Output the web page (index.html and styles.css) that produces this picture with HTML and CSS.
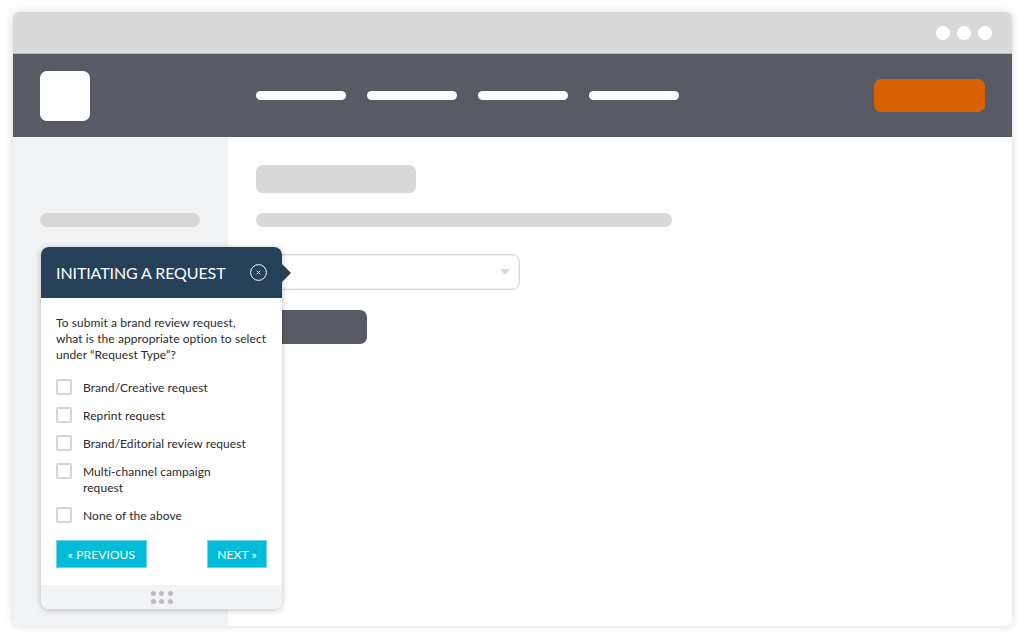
FILE: index.html
```html
<!DOCTYPE html>
<html lang="en">
<head>
    <meta charset="UTF-8">
    <meta name="viewport" content="width=device-width, initial-scale=1.0">
    <title>Initiating a Request</title>
    <link rel="stylesheet" href="styles.css">
</head>
<body>
    <div class="window">
        <div class="title-bar">
            <span class="dot"></span>
            <span class="dot"></span>
            <span class="dot"></span>
        </div>
        <header class="nav-header">
            <div class="logo"></div>
            <nav class="nav-links">
                <span class="nav-bar"></span>
                <span class="nav-bar"></span>
                <span class="nav-bar"></span>
                <span class="nav-bar"></span>
            </nav>
            <div class="nav-cta"></div>
        </header>
        <div class="page">
            <aside class="sidebar">
                <div class="skeleton-line"></div>
            </aside>
            <main class="main-content">
                <div class="skeleton-title"></div>
                <div class="skeleton-line wide"></div>
                <div class="fake-select"><span class="caret"></span></div>
                <div class="fake-button"></div>
            </main>
        </div>

        <section class="popover">
            <div class="popover-head">
                <h1>INITIATING A REQUEST</h1>
                <svg class="close-icon" width="17" height="17" viewBox="0 0 17 17">
                    <circle cx="8.5" cy="8.5" r="7.9" fill="none" stroke="#fff" stroke-width="1"/>
                    <path d="M6.7 6.7l3.6 3.6M10.3 6.7l-3.6 3.6" fill="none" stroke="#fff" stroke-width="1"/>
                </svg>
            </div>
            <div class="popover-body">
                <p class="question">To submit a brand review request,<br>what is the appropriate option to select<br>under “Request Type”?</p>
                <ul class="options">
                    <li><span class="checkbox"></span><span class="option-text">Brand/Creative request</span></li>
                    <li><span class="checkbox"></span><span class="option-text">Reprint request</span></li>
                    <li><span class="checkbox"></span><span class="option-text">Brand/Editorial review request</span></li>
                    <li><span class="checkbox"></span><span class="option-text">Multi-channel campaign<br>request</span></li>
                    <li><span class="checkbox"></span><span class="option-text">None of the above</span></li>
                </ul>
                <div class="popover-actions">
                    <button type="button" class="prev">« PREVIOUS</button>
                    <button type="button" class="next">NEXT »</button>
                </div>
            </div>
            <div class="popover-foot">
                <div class="grip">
                    <span></span><span></span><span></span>
                    <span></span><span></span><span></span>
                </div>
            </div>
        </section>
    </div>
</body>
</html>
```

FILE: styles.css
```css
html, body { margin: 0; height: 100%; overflow: hidden; }
body { background-color: #fff; font-family: "Lato", "Open Sans", sans-serif; }

.window { position: relative; width: 999px; height: 614px; margin: 12px 13px 0; display: flex; flex-direction: column; background-color: #fff; border-radius: 6px; box-shadow: 0 0 8px rgba(0,0,0,0.16); }

.title-bar { height: 41px; flex: none; display: flex; align-items: center; justify-content: flex-end; gap: 7px; padding: 0 20px 0 0; background-color: #d9d9d9; border-radius: 6px 6px 0 0; border-bottom: 1px solid #b9b9bb; }
.dot { width: 14px; height: 14px; border-radius: 50%; background-color: #fff; }

.nav-header { height: 83px; flex: none; display: flex; align-items: center; padding: 0 27px; background-color: #585b63; }
.logo { width: 50px; height: 50px; border-radius: 7px; background-color: #fff; }
.nav-links { display: flex; gap: 21px; margin-left: 166px; }
.nav-bar { width: 90px; height: 9px; border-radius: 5px; background-color: #fff; }
.nav-cta { width: 111px; height: 33px; margin-left: auto; border-radius: 7px; background-color: #d86000; }

.page { flex: 1; display: flex; min-height: 0; }
.sidebar { width: 215px; flex: none; box-sizing: border-box; padding: 76px 27px 0; background-color: #f2f3f5; border-radius: 0 0 0 6px; }
.main-content { flex: 1; padding: 28px 0 0 28px; }

.skeleton-line { width: 160px; height: 14px; border-radius: 7px; background-color: #d9d9d9; }
.skeleton-line.wide { width: 416px; margin-top: 20px; }
.skeleton-title { width: 160px; height: 28px; border-radius: 7px; background-color: #d9d9d9; }

.fake-select { box-sizing: border-box; position: relative; width: 264px; height: 36px; margin-top: 27px; background-color: #fff; border: 1px solid #dadada; border-radius: 8px; box-shadow: inset 0 0 0 1px #f2f2f2; }
.caret { position: absolute; right: 9px; top: 14px; width: 0; height: 0; border-left: 5px solid transparent; border-right: 5px solid transparent; border-top: 6px solid #d9d9d9; }
.fake-button { width: 111px; height: 34px; margin-top: 20px; border-radius: 7px; background-color: #585b63; }

.popover { position: absolute; left: 28px; top: 235px; width: 241px; height: 362px; display: flex; flex-direction: column; background-color: #fff; border-radius: 8px; box-shadow: 0 1px 6px rgba(0,0,0,0.25); color: #2b2b2b; }
.popover-head { position: relative; height: 51px; flex: none; box-sizing: border-box; display: flex; align-items: center; justify-content: space-between; padding: 0 15px; background-color: #254159; border-radius: 8px 8px 0 0; color: #fff; }
.popover-head::after { content: ""; position: absolute; left: 100%; top: 17px; border-left: 9px solid #254159; border-top: 9px solid transparent; border-bottom: 9px solid transparent; }
.popover-head h1 { margin: 0; font-size: 16px; font-weight: 400; letter-spacing: -0.1px; }
.close-icon { flex: none; }

.popover-body { flex: 1; padding: 17px 15px 0; }
.question { margin: 0; font-size: 12px; line-height: 16px; letter-spacing: 0.08px; white-space: nowrap; }
.options { list-style: none; margin: 16px 0 0; padding: 0; }
.options li { display: flex; align-items: flex-start; font-size: 12px; line-height: 16px; letter-spacing: 0.07px; margin-bottom: 11px; }
.checkbox { flex: none; box-sizing: border-box; width: 16px; height: 16px; margin-right: 11px; border: 2px solid #d6d6d6; border-radius: 2px; background-color: #fff; }
.option-text { padding-top: 1px; }

.popover-actions { display: flex; justify-content: space-between; margin-top: 16px; }
.popover-actions button { height: 28px; padding: 0; border: 1px solid #6fd3e6; background-color: #00bcd8; color: #fff; font-family: inherit; font-size: 12px; letter-spacing: 0.1px; }
.prev { width: 91px; }
.next { width: 60px; }

.popover-foot { height: 24px; flex: none; display: flex; align-items: center; justify-content: center; background-color: #f2f3f5; border-radius: 0 0 8px 8px; }
.grip { display: grid; grid-template-columns: repeat(3, 5px); gap: 3px 3.5px; }
.grip span { width: 5px; height: 5px; border-radius: 50%; background-color: #bcbcc0; }
```
